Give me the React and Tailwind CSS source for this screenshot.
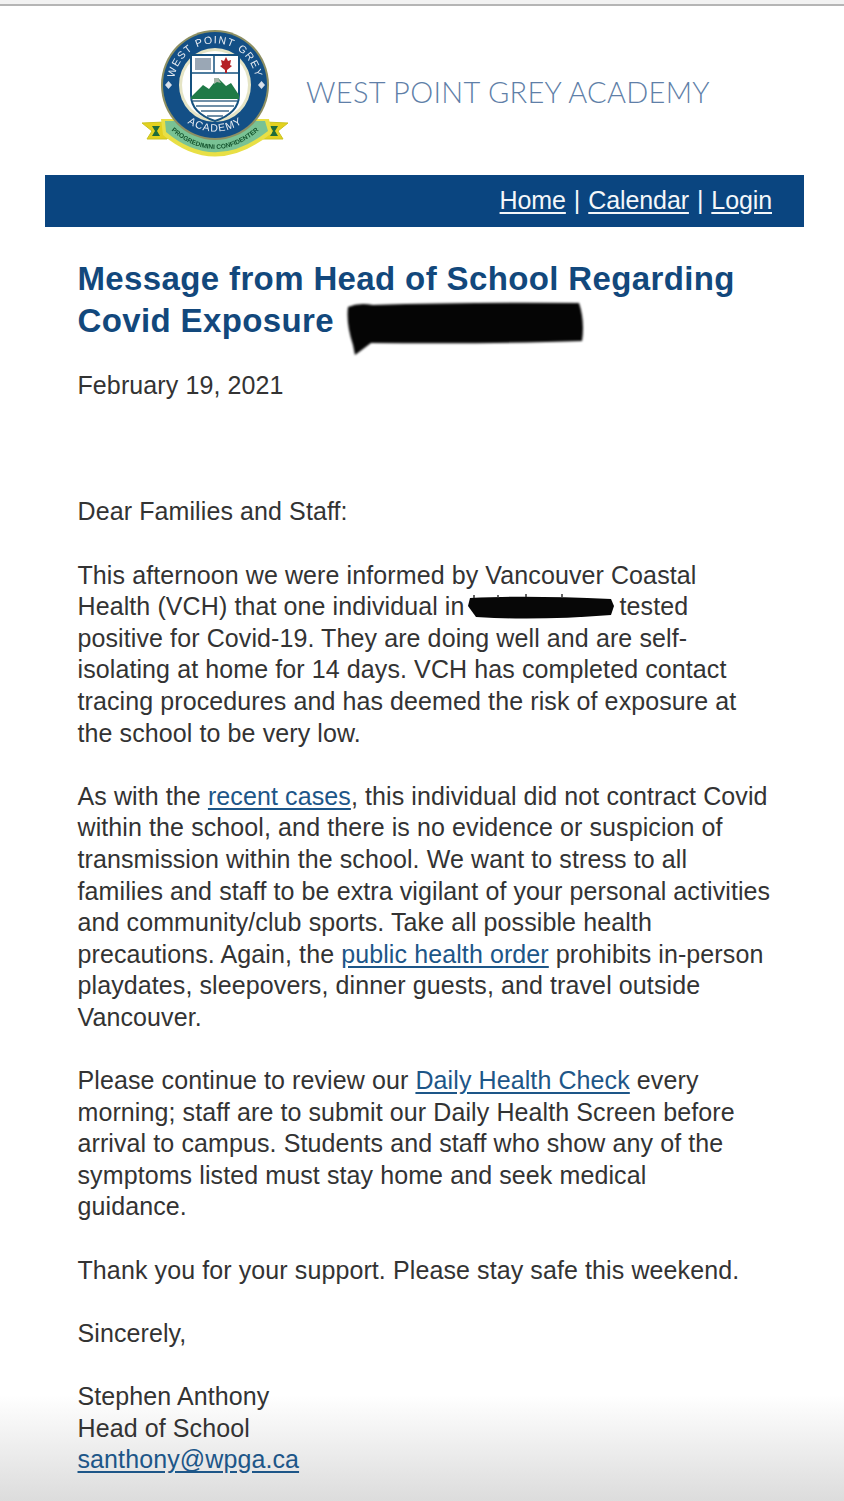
const sans = "font-['Liberation_Sans',Arial,sans-serif]";

function Crest() {
  return (
    <svg width="150" height="140" viewBox="0 0 150 140" className="shrink-0 blur-[0.4px]">
      <defs>
        <path id="topArc" d="M35 74 A 41 41 0 1 1 113 74" />
        <path id="botArc" d="M27 72 A 48.5 48.5 0 0 0 121 72" />
        <path id="ribArc" d="M24 102 Q 74 150 124 102" />
      </defs>
      <path d="M1 100 L24 99 L32 108 L26 116 L6 116 L11 108 Z" fill="#e4d11f" stroke="#c9c320" />
      <path d="M147 100 L124 99 L116 108 L122 116 L142 116 L137 108 Z" fill="#e4d11f" stroke="#c9c320" />
      <path d="M11 103 h8 l-3 5 3 5 h-8 l3 -5 z" fill="#1e6b3a" />
      <path d="M137 103 h-8 l3 5 -3 5 h8 l-3 -5 z" fill="#1e6b3a" />
      <path d="M20 96 L128 96 L131 110 Q 74 156 22 112 Z" fill="#e8df45" />
      <path d="M24 98 L124 98 L127 108 Q 74 150 25 109 Z" fill="#79c294" />
      <ellipse cx="74" cy="62" rx="54" ry="55" fill="#8d8f62" />
      <ellipse cx="74" cy="62" rx="52" ry="53" fill="#134f86" />
      <ellipse cx="74" cy="62" rx="36" ry="37" fill="#e5e4c5" />
      <ellipse cx="74" cy="62" rx="33" ry="34" fill="#fff" />
      <path d="M50 32 H98 V72 Q98 90 74 98 Q50 90 50 72 Z" fill="#fff" stroke="#15517f" strokeWidth="2" />
      <path d="M50 50 H98 M73 32 V50" stroke="#15517f" strokeWidth="1.5" />
      <rect x="54" y="35" width="16" height="12" fill="#9aa7b5" />
      <path d="M85 34 l2 4 3 -1 -1 5 2 1 -5 4 v3 h-2 v-3 l-5 -4 2 -1 -1 -5 3 1 z" fill="#b52025" />
      <path d="M50 74 L62 62 L68 66 L77 55 L85 63 L90 60 L98 72 V76 H50 Z" fill="#1f7a47" />
      <path d="M73 55 l4 0 3 5 -4 -1 -3 2z" fill="#a8b5a8" />
      <path d="M52 78 H96 M55 83 H93 M60 88 H88 M66 93 H82" stroke="#6f8fa8" strokeWidth="2" />
      <text fill="#e8ecf2" fontSize="10.5" fontFamily="Liberation Sans" letterSpacing="1.2" textAnchor="middle">
        <textPath href="#topArc" startOffset="50%">WEST POINT GREY</textPath>
      </text>
      <text fill="#e8ecf2" fontSize="10.5" fontFamily="Liberation Sans" letterSpacing="1" textAnchor="middle">
        <textPath href="#botArc" startOffset="50%">ACADEMY</textPath>
      </text>
      <text fill="#14532d" fontSize="6.5" fontFamily="Liberation Sans" fontWeight="700" textAnchor="middle">
        <textPath href="#ribArc" startOffset="50%">PROGREDIMINI CONFIDENTER</textPath>
      </text>
      <path d="M24 62 l3.5 -4 3.5 4 -3.5 4z M117 62 l3.5 -4 3.5 4 -3.5 4z" fill="#d8e0ea" />
    </svg>
  );
}

function Para({ children, className = "" }) {
  return <p className={`mb-[31.6px] ${className}`}>{children}</p>;
}

function A({ children }) {
  return <a href="#" className="text-[#1d5688] underline underline-offset-[3px]">{children}</a>;
}

export default function App() {
  return (
    <div className={`${sans} w-[844px] h-[1501px] overflow-hidden bg-[linear-gradient(to_bottom,#ffffff_1395px,#dcdcdc_1501px)] text-[#333333]`}>
      <div className="h-[6px] border-b-2 border-[#b5b5b5] bg-[#f2f2f2]" />
      <header className="flex items-start h-[169px] pl-[141px] pt-[17px]">
        <Crest />
        <div className="ml-[15px] mt-[47px] font-['Lato',sans-serif] font-light text-[29px] text-[#5f7fa8] tracking-[0.3px] whitespace-nowrap">
          WEST POINT GREY ACADEMY
        </div>
      </header>
      <nav className="mx-[45px] w-[759px] h-[52px] bg-[#0a4580] flex items-center justify-end pr-[32px] text-[25px] text-[#f4f7fa] tracking-[-0.1px]">
        <a href="#" className="underline underline-offset-[3px]">Home</a>
        <span className="mx-[8px]">|</span>
        <a href="#" className="underline underline-offset-[3px]">Calendar</a>
        <span className="mx-[8px]">|</span>
        <a href="#" className="underline underline-offset-[3px]">Login</a>
      </nav>
      <main className="pl-[77.5px] pt-[31px] text-[25px] leading-[31.6px] tracking-[0.1px] whitespace-nowrap">
        <h1 className="text-[33px] leading-[42px] font-bold text-[#12487c] tracking-[0.37px]">
          Message from Head of School Regarding<br />
          <span className="relative">
            Covid Exposure
            <svg width="240" height="62" viewBox="0 0 240 62" className="absolute left-[267px] top-[-3px] blur-[1px]">
              <path d="M3 8 Q14 3 28 6 Q120 3 234 4 Q240 22 237 42 Q160 45 26 44 L10 56 L8 46 Q1 25 3 8 Z" fill="#050505" />
            </svg>
          </span>
        </h1>
        <p className="mt-[28px] mb-[94.8px]">February 19, 2021</p>
        <Para>Dear Families and Staff:</Para>
        <Para>
          This afternoon we were informed by Vancouver Coastal<br />
          Health (VCH) that one individual in
          <span className="relative inline-block w-[155px] h-[24px] align-middle">
            <svg width="150" height="30" viewBox="0 0 150 30" className="absolute left-[1px] top-[-5px] blur-[0.7px]">
              <path d="M4 6 Q60 3 145 7 L148 14 L145 23 Q70 29 10 25 L2 14 Z" fill="#070707" />
              <path d="M8 6 v-3 M32 6 v-3 M60 5 v-3 M96 5 v-3" stroke="#333" strokeWidth="1.5" />
            </svg>
          </span>
          tested<br />
          positive for Covid-19. They are doing well and are self-<br />
          isolating at home for 14 days. VCH has completed contact<br />
          tracing procedures and has deemed the risk of exposure at<br />
          the school to be very low.
        </Para>
        <Para>
          As with the <A>recent cases</A>, this individual did not contract Covid<br />
          within the school, and there is no evidence or suspicion of<br />
          transmission within the school. We want to stress to all<br />
          families and staff to be extra vigilant of your personal activities<br />
          and community/club sports. Take all possible health<br />
          precautions. Again, the <A>public health order</A> prohibits in-person<br />
          playdates, sleepovers, dinner guests, and travel outside<br />
          Vancouver.
        </Para>
        <Para>
          Please continue to review our <A>Daily Health Check</A> every<br />
          morning; staff are to submit our Daily Health Screen before<br />
          arrival to campus. Students and staff who show any of the<br />
          symptoms listed must stay home and seek medical<br />
          guidance.
        </Para>
        <Para>Thank you for your support. Please stay safe this weekend.</Para>
        <Para>Sincerely,</Para>
        <p>
          Stephen Anthony<br />
          Head of School<br />
          <A>santhony@wpga.ca</A>
        </p>
      </main>
    </div>
  );
}
